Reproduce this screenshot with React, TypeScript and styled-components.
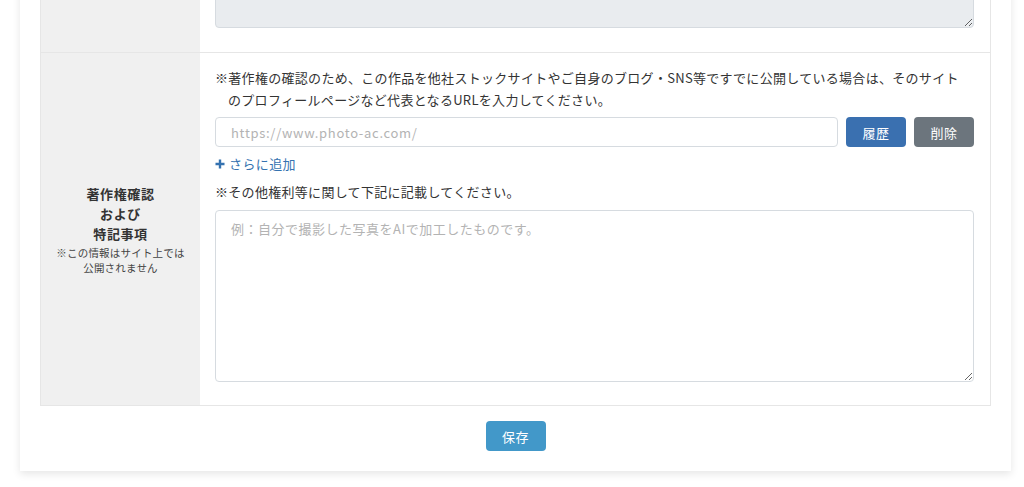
import React from 'react';
import styled, { createGlobalStyle } from 'styled-components';

const GlobalStyle = createGlobalStyle`
  html, body {
    margin: 0;
    padding: 0;
    background: #ffffff;
    font-family: "Noto Sans CJK JP", "Noto Sans", "Liberation Sans", sans-serif;
    color: #333;
    overflow: hidden;
  }
`;

const Page = styled.div`
  padding: 0 13px 16px 20px;
  margin-top: -97px;
`;

const Card = styled.div`
  background: #fff;
  box-shadow: 0 3px 8px rgba(0, 0, 0, 0.1);
  padding: 20px 20px 20px;
`;

const Table = styled.div`
  border: 1px solid #e6e6e6;
`;

const Row = styled.div<{ $last?: boolean }>`
  display: grid;
  grid-template-columns: 159px 1fr;
  border-bottom: ${p => (p.$last ? 'none' : '1px solid #e6e6e6')};
`;

const LabelCell = styled.div`
  background: #f0f0f0;
  display: flex;
  flex-direction: column;
  align-items: center;
  justify-content: center;
  text-align: center;
  padding: 8px 4px;
`;

const LabelTitle = styled.div`
  font-size: 13px;
  font-weight: 700;
  line-height: 20px;
  letter-spacing: 0.6px;
  color: #333;
`;

const LabelNote = styled.div`
  font-size: 10.5px;
  line-height: 15px;
  letter-spacing: 0.2px;
  color: #444;
  margin-top: 1px;
`;

const ContentCell = styled.div<{ $bottom?: number }>`
  padding: 14px 16px ${p => p.$bottom ?? 24}px 15px;
  display: flex;
  flex-direction: column;
`;

const Note = styled.p`
  margin: 0;
  font-size: 13px;
  line-height: 22px;
  letter-spacing: 0.3px;
  padding-left: 1em;
  text-indent: -1em;
  color: #333;
`;

const TextArea = styled.textarea<{ $h: number; $gap?: number }>`
  box-sizing: border-box;
  width: 100%;
  height: ${p => p.$h}px;
  margin-top: ${p => p.$gap ?? 0}px;
  border: 1px solid #d6dbe0;
  border-radius: 4px;
  padding: 8px 15px;
  font-family: inherit;
  font-size: 13px;
  letter-spacing: 0.5px;
  color: #333;
  background: #fff;
  display: block;
  &::placeholder {
    color: #b3b3b3;
  }
  &:disabled {
    background: #e9ecef;
  }
`;

const UrlRow = styled.div`
  display: flex;
  gap: 8px;
  margin-top: 6px;
`;

const Input = styled.input`
  box-sizing: border-box;
  flex: 1;
  height: 30px;
  border: 1px solid #d6dbe0;
  border-radius: 4px;
  padding: 0 15px;
  font-family: inherit;
  font-size: 13px;
  letter-spacing: 0.7px;
  &::placeholder {
    color: #b3b3b3;
  }
`;

const Button = styled.button<{ $bg: string }>`
  width: 60px;
  height: 30px;
  border: none;
  border-radius: 4px;
  background: ${p => p.$bg};
  color: #fff;
  font-family: inherit;
  font-size: 13px;
  letter-spacing: 0.5px;
  padding: 0;
`;

const AddLink = styled.a`
  display: flex;
  align-items: center;
  gap: 4px;
  color: #3572b0;
  font-size: 13px;
  line-height: 22px;
  letter-spacing: 0.4px;
  margin-top: 6px;
  text-decoration: none;
`;

const SubNote = styled(Note)`
  margin-top: 6px;
`;

const Footer = styled.div`
  display: flex;
  justify-content: center;
  margin-top: 15px;
`;

const PlusIcon = () => (
  <svg width="10" height="10" viewBox="0 0 10 10">
    <path d="M5 0.5v9M0.5 5h9" stroke="#3572b0" strokeWidth="2.4" />
  </svg>
);

export default function App() {
  return (
    <>
      <GlobalStyle />
      <Page>
        <Card>
          <Table>
            <Row>
              <LabelCell />
              <ContentCell>
                <TextArea $h={90} disabled />
              </ContentCell>
            </Row>
            <Row $last>
              <LabelCell>
                <LabelTitle>
                  著作権確認
                  <br />
                  および
                  <br />
                  特記事項
                </LabelTitle>
                <LabelNote>
                  ※この情報はサイト上では
                  <br />
                  公開されません
                </LabelNote>
              </LabelCell>
              <ContentCell $bottom={23}>
                <Note>
                  ※著作権の確認のため、この作品を他社ストックサイトやご自身のブログ・SNS等ですでに公開している場合は、そのサイト
                  <br />
                  のプロフィールページなど代表となるURLを入力してください。
                </Note>
                <UrlRow>
                  <Input placeholder="https://www.photo-ac.com/" />
                  <Button $bg="#3a70b0">履歴</Button>
                  <Button $bg="#6c757d">削除</Button>
                </UrlRow>
                <AddLink href="#">
                  <PlusIcon />
                  さらに追加
                </AddLink>
                <SubNote>※その他権利等に関して下記に記載してください。</SubNote>
                <TextArea
                  $h={172}
                  $gap={7}
                  placeholder="例：自分で撮影した写真をAIで加工したものです。"
                />
              </ContentCell>
            </Row>
          </Table>
          <Footer>
            <Button $bg="#4298c9">保存</Button>
          </Footer>
        </Card>
      </Page>
    </>
  );
}
